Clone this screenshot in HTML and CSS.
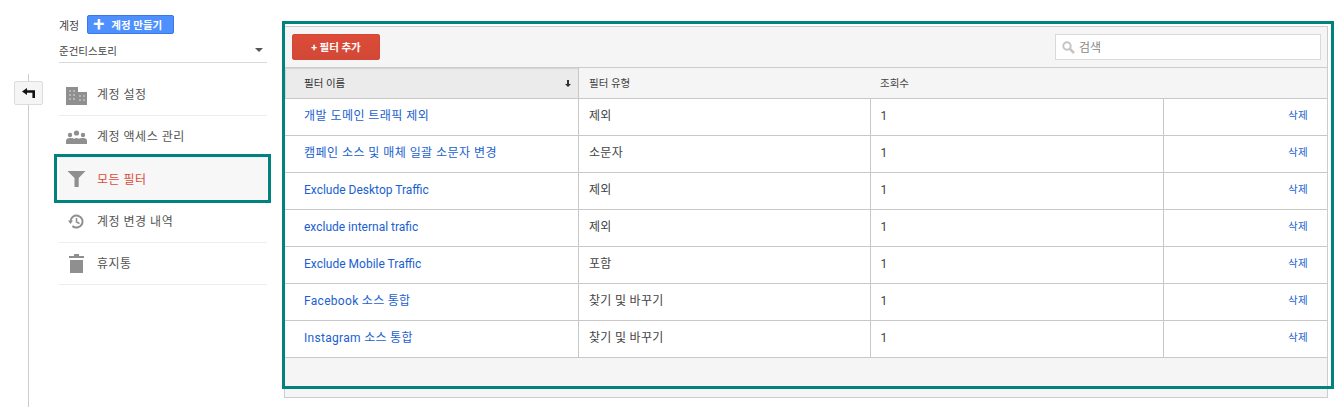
FILE: index.html
```html
<!DOCTYPE html>
<html lang="ko">
<head>
    <meta charset="UTF-8">
    <title>모든 필터</title>
    <link rel="stylesheet" href="styles.css">
</head>
<body>
    <div class="rail">
        <button class="back-button">
            <svg width="13" height="10" viewBox="0 0 13 10"><path d="M0 3.500 5 0v2.200h8V10h-2.600V4.800H5V7z" fill="#111"/></svg>
        </button>
    </div>

    <div class="sidebar">
        <div class="account-head">
            <span class="account-label">계정</span>
            <button class="create-button"><span class="plus">+</span>계정 만들기</button>
        </div>
        <div class="account-select">
            <span>준건티스토리</span>
            <span class="caret"></span>
        </div>
        <div class="nav">
            <div class="nav-item">
                <svg class="nav-icon icon-building" width="21" height="18" viewBox="0 0 21 18">
                    <path d="M0 0h12v5h9v13H0z" fill="#8f8f8f"/>
                    <path d="M3 3h2v2H3zm4 0h2v2H7zM3 7h2v2H3zm4 0h2v2H7zm-4 4h2v2H3zm4 0h2v2H7zm6-3h2v2h-2zm4 0h2v2h-2zm-4 4h2v2h-2zm4 0h2v2h-2z" fill="#b5b5b5"/>
                </svg>
                <span>계정 설정</span>
            </div>
            <div class="nav-item">
                <svg class="nav-icon icon-people" width="21" height="14" viewBox="0 0 21 14">
                    <circle cx="4" cy="5" r="2.200" fill="#8f8f8f"/>
                    <circle cx="10.500" cy="3" r="2.600" fill="#8f8f8f"/>
                    <circle cx="17" cy="5" r="2.200" fill="#8f8f8f"/>
                    <path d="M0 14v-3q0-3 4-3t4 1q2.500-2 5 0 0-1 4-1t4 3v3z" fill="#8f8f8f"/>
                </svg>
                <span>계정 액세스 관리</span>
            </div>
            <div class="nav-item active">
                <svg class="nav-icon" width="18" height="16" viewBox="0 0 18 16"><path d="M0 0h18l-6.800 7v9H7V7z" fill="#8f8f8f"/></svg>
                <span>모든 필터</span>
            </div>
            <div class="nav-item">
                <svg class="nav-icon" width="17" height="15" viewBox="0 0 17 15">
                    <path d="M2.500 7.500a6 6 0 1 1 1.900 4.400" fill="none" stroke="#8f8f8f" stroke-width="2"/>
                    <path d="M0 6.500h5L2.500 10z" fill="#8f8f8f"/>
                    <path d="M8.500 4v4l3 1.500" fill="none" stroke="#8f8f8f" stroke-width="1.500"/>
                </svg>
                <span>계정 변경 내역</span>
            </div>
            <div class="nav-item">
                <svg class="nav-icon" width="15" height="19" viewBox="0 0 15 19"><path d="M0 2h5V0h5v2h5v2H0zm1 4h13v13H1z" fill="#8f8f8f"/></svg>
                <span>휴지통</span>
            </div>
        </div>
    </div>

    <div class="main">
        <div class="frame"></div>
        <div class="toolbar">
            <button class="add-button">+ 필터 추가</button>
            <div class="search">
                <svg width="13" height="13" viewBox="0 0 13 13">
                    <circle cx="5" cy="5" r="3.700" fill="none" stroke="#c4c4c4" stroke-width="2"/>
                    <path d="M8 8l4 4" stroke="#c4c4c4" stroke-width="2.500"/>
                </svg>
                <span>검색</span>
            </div>
        </div>
        <table class="filters">
            <thead>
                <tr>
                    <th class="sorted">필터 이름
                        <svg class="sort-arrow" width="6" height="7" viewBox="0 0 6 7"><path d="M2 0h2v4h2L3 7 0 4h2z" fill="#333"/></svg>
                    </th>
                    <th>필터 유형</th>
                    <th>조회수</th>
                    <th></th>
                </tr>
            </thead>
            <tbody>
                <tr><td class="ko"><a class="ko" href="#">개발 도메인 트래픽 제외</a></td><td class="ko">제외</td><td>1</td><td class="actions"><a href="#">삭제</a></td></tr>
                <tr><td class="ko"><a class="ko" href="#">캠페인 소스 및 매체 일괄 소문자 변경</a></td><td class="ko">소문자</td><td>1</td><td class="actions"><a href="#">삭제</a></td></tr>
                <tr><td><a href="#">Exclude Desktop Traffic</a></td><td class="ko">제외</td><td>1</td><td class="actions"><a href="#">삭제</a></td></tr>
                <tr><td><a href="#">exclude internal trafic</a></td><td class="ko">제외</td><td>1</td><td class="actions"><a href="#">삭제</a></td></tr>
                <tr><td><a href="#">Exclude Mobile Traffic</a></td><td class="ko">포함</td><td>1</td><td class="actions"><a href="#">삭제</a></td></tr>
                <tr><td class="ko"><a href="#">Facebook 소스 통합</a></td><td class="ko">찾기 및 바꾸기</td><td>1</td><td class="actions"><a href="#">삭제</a></td></tr>
                <tr><td class="ko"><a href="#">Instagram 소스 통합</a></td><td class="ko">찾기 및 바꾸기</td><td>1</td><td class="actions"><a href="#">삭제</a></td></tr>
            </tbody>
        </table>
    </div>
</body>
</html>
```

FILE: styles.css
```css
body {
    display: flex;
    margin: 0;
    height: 407px;
    overflow: hidden;
    background: #fff;
    color: #444;
    font-family: Roboto, "Noto Sans CJK KR", sans-serif;
    font-size: 12px;
}

/* left rail with the back button */
.rail {
    position: relative;
    flex: none;
    width: 59px;
    box-sizing: border-box;
    padding: 81px 0 0 14px;
}

.rail::before {
    content: "";
    position: absolute;
    left: 28px;
    top: 74px;
    bottom: 0;
    width: 1px;
    background: #ccc;
}

.back-button {
    position: relative;
    display: flex;
    align-items: center;
    justify-content: center;
    width: 29px;
    height: 24px;
    padding: 0;
    background: #f5f5f5;
    border: 1px solid #dcdcdc;
    border-radius: 2px;
}

/* sidebar */
.sidebar {
    flex: none;
    width: 208px;
    padding-top: 15px;
}

.account-head {
    display: flex;
    align-items: center;
    gap: 8px;
    height: 19px;
    font-size: 11px;
}

.create-button {
    display: flex;
    align-items: center;
    width: 87px;
    height: 19px;
    padding: 0 0 0 5px;
    box-sizing: border-box;
    background: #4d90fe;
    border: 1px solid #3b78e7;
    border-radius: 2px;
    color: #fff;
    font-family: inherit;
    font-size: 10.500px;
    font-weight: 700;
    white-space: nowrap;
}

.plus {
    margin-right: 7px;
    font-size: 20px;
    font-weight: 500;
    line-height: 15px;
}

.account-select {
    display: flex;
    align-items: center;
    justify-content: space-between;
    box-sizing: border-box;
    height: 28px;
    margin-top: 1px;
    padding: 3px 4px 0 0;
    border-bottom: 1px solid #d9d9d9;
    font-size: 10.500px;
}

.caret {
    border-style: solid;
    border-width: 4px 4px 0;
    border-color: #555 transparent transparent;
}

.nav {
    margin-top: 10.750px;
}

.nav-item {
    position: relative;
    display: flex;
    align-items: center;
    gap: 10px;
    box-sizing: border-box;
    height: 42.250px;
    border-bottom: 1px solid #eee;
    font-size: 12px;
    color: #555;
}

.nav-item span {
    margin-bottom: 2px;
    letter-spacing: 0.500px;
}

.nav-icon {
    flex: none;
    width: 21px;
    margin-left: 7px;
}

.icon-building {
    margin-top: 4px;
}

.icon-people {
    margin-top: 1px;
}

.nav-item.active {
    background: #f7f7f7;
    border-bottom: none;
    color: #dd4b39;
}

/* teal highlight round the active item */
.nav-item.active::after {
    content: "";
    position: absolute;
    left: -5px;
    right: -4px;
    top: -4px;
    bottom: -2px;
    border: 3px solid #00837e;
}

/* main panel */
.main {
    position: relative;
    flex: none;
    width: 1044px;
    height: 372px;
    margin: 26px 0 0 17px;
    box-sizing: border-box;
    background: #f5f5f5;
    border: 1px solid #ccc;
}

.frame {
    position: absolute;
    left: -3px;
    top: -6px;
    width: 1052px;
    height: 368px;
    box-sizing: border-box;
    border: 3px solid #00837e;
    pointer-events: none;
    z-index: 1;
}

.toolbar {
    display: flex;
    align-items: center;
    justify-content: space-between;
    height: 40px;
    padding: 0 6px 0 7px;
    box-sizing: border-box;
}

.add-button {
    width: 88px;
    height: 26px;
    padding-bottom: 2px;
    background: linear-gradient(#dd4b39, #d14836);
    border: 1px solid #d14836;
    border-radius: 2px;
    color: #fff;
    font-family: inherit;
    font-size: 10.500px;
    font-weight: 700;
}

.search {
    display: flex;
    align-items: center;
    gap: 4px;
    width: 266px;
    height: 26px;
    padding-left: 6px;
    box-sizing: border-box;
    background: #fff;
    border: 1px solid #d9d9d9;
    color: #888;
    font-size: 12px;
}

.search span {
    margin-bottom: 2px;
}

.filters {
    width: 100%;
    border-collapse: collapse;
    table-layout: fixed;
    border-top: 1px solid #ccc;
}

.filters th, .filters td {
    height: 34px;
    padding: 0 0 2px 10px;
    border-bottom: 1px solid #c8c8c8;
    border-right: 1px solid #c8c8c8;
    text-align: left;
    font-weight: 400;
    white-space: nowrap;
}

.filters th {
    position: relative;
    height: 28px;
    font-size: 10.500px;
    background: #f5f5f5;
    border-right: none;
    color: #444;
}

.filters th:nth-child(1) { width: 274px; padding-left: 19px; }
.filters th:nth-child(2) { width: 281px; }
.filters th:nth-child(3) { width: 283px; }

.filters th.sorted {
    background: #ebebeb;
    border-right: 1px solid #c8c8c8;
    box-shadow: inset 1px 1px 1px #d4d4d4;
    color: #333;
}

.sort-arrow {
    position: absolute;
    right: 7px;
    top: 12px;
}

.filters td:first-child {
    padding-left: 19px;
}

.filters td {
    background: #fff;
    color: #444;
}

.filters td:last-child {
    border-right: none;
}

.filters a {
    color: #1a5fd0;
    text-decoration: none;
}

.filters a.ko {
    letter-spacing: 0.450px;
}

/* hangul sits low in the line, lift those cells a bit */
.filters td.ko {
    height: 31px;
    padding-bottom: 5px;
    letter-spacing: 0.300px;
}

.filters .actions {
    height: 31px;
    padding-bottom: 5px;
    padding-right: 19px;
    text-align: right;
    font-size: 10.500px;
    letter-spacing: 0.300px;
}
```
